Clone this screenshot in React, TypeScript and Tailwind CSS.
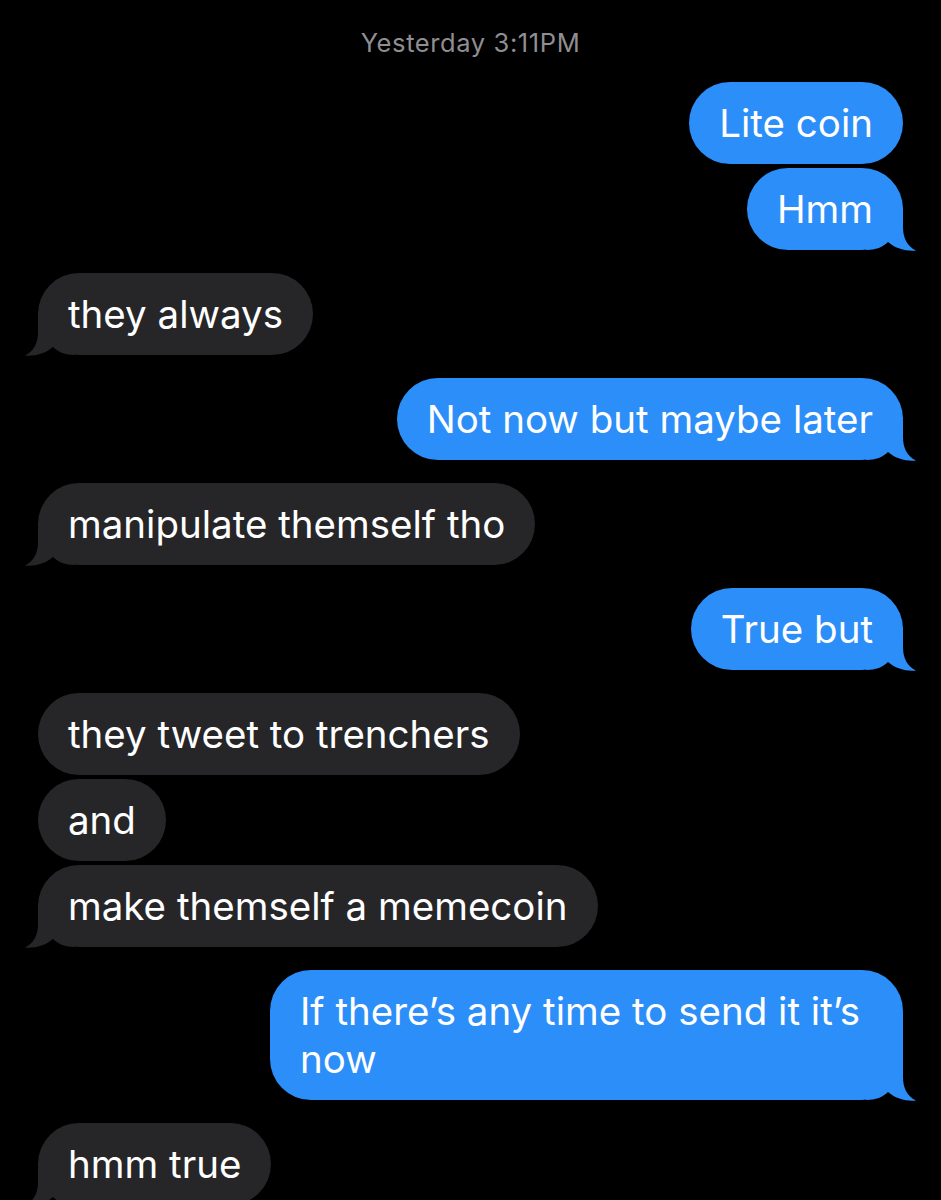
import React from "react";

type Msg = { text: string; me: boolean; tail?: boolean };

const groups: Msg[][] = [
  [
    { text: "Lite coin", me: true },
    { text: "Hmm", me: true, tail: true },
  ],
  [{ text: "they always", me: false, tail: true }],
  [{ text: "Not now but maybe later", me: true, tail: true }],
  [{ text: "manipulate themself tho", me: false, tail: true }],
  [{ text: "True but", me: true, tail: true }],
  [
    { text: "they tweet to trenchers", me: false },
    { text: "and", me: false },
    { text: "make themself a memecoin", me: false, tail: true },
  ],
  [{ text: "If there’s any time to send it it’s now", me: true, tail: true }],
  [{ text: "hmm true", me: false, tail: true }],
];

// iMessage-style tail, drawn over the bottom corner of the last bubble in a group
const Tail = ({ me }: { me: boolean }) => (
  <svg
    width="50"
    height="44"
    viewBox="0 0 50 44"
    className={
      me
        ? "absolute bottom-[-1px] right-[-13px] fill-[#2c8ef8]"
        : "absolute bottom-[-1px] left-[-13px] -scale-x-100 fill-[#262629]"
    }
  >
    <path d="M0 0 H37 V20 C37 31 41 39 50 43.5 C41 44.5 30 42 22 35 C17 40 10 43 0 43 Z" />
  </svg>
);

const Bubble = ({ msg }: { msg: Msg }) => (
  <div className={msg.me ? "flex justify-end" : "flex justify-start"}>
    <div
      className={
        msg.me
          ? "relative max-w-[633px] rounded-[41px] bg-[#2c8ef8] px-[30px] py-[17px] text-[38.5px] leading-[48px] text-white"
          : "relative max-w-[633px] rounded-[41px] bg-[#262629] px-[30px] py-[17px] text-[38.5px] leading-[48px] text-white"
      }
    >
      {msg.tail && <Tail me={msg.me} />}
      <span className="relative">{msg.text}</span>
    </div>
  </div>
);

export default function App() {
  return (
    <div className="min-h-[1200px] w-[941px] overflow-hidden bg-black font-['Inter','Noto_Sans',sans-serif] px-[38px]">
      <div className="pt-[27px] pb-[24px] text-center text-[25.5px] leading-[31px] tracking-[0.6px] text-[#8e8e93]">
        Yesterday 3:11PM
      </div>
      <div className="flex flex-col gap-[23px]">
        {groups.map((g, i) => (
          <div key={i} className="flex flex-col gap-[4px]">
            {g.map((m, j) => (
              <Bubble key={j} msg={m} />
            ))}
          </div>
        ))}
      </div>
    </div>
  );
}
